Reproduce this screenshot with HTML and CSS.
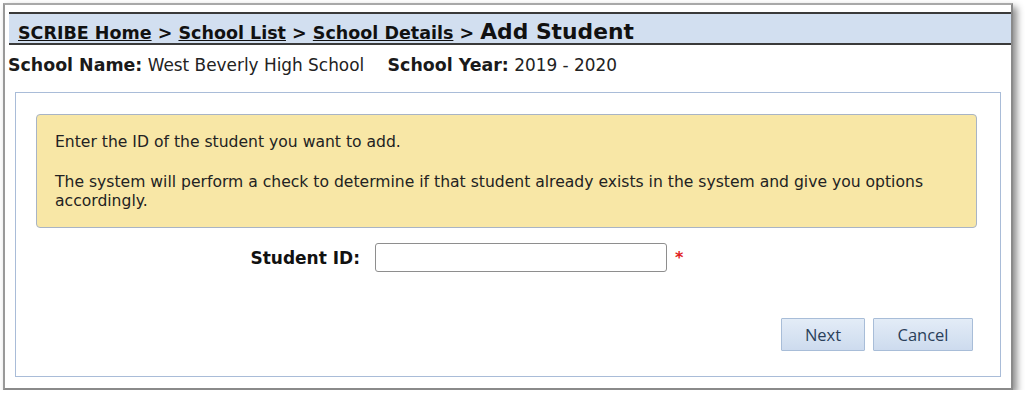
FILE: index.html
```html
<!DOCTYPE html>
<html>
<head>
<meta charset="utf-8">
<link rel="stylesheet" href="styles.css">
</head>
<body>
<div class="frame">
  <div class="crumbs"><a href="#">SCRIBE Home</a> &gt; <a href="#">School List</a> &gt; <a href="#">School Details</a> &gt; <span class="current">Add Student</span></div>
  <div class="school-info"><span class="lbl">School Name:</span> <span class="val">West Beverly High School</span> <span class="lbl year">School Year:</span> <span class="val">2019 - 2020</span></div>
  <div class="panel">
    <div class="notice">
      <p>Enter the ID of the student you want to add.</p>
      <p>The system will perform a check to determine if that student already exists in the system and give you options accordingly.</p>
    </div>
    <div class="field-row">
      <label class="field-label" for="sid">Student ID:</label>
      <input class="field-input" id="sid" type="text">
      <span class="required">*</span>
    </div>
    <div class="actions">
      <button class="btn btn-next">Next</button>
      <button class="btn btn-cancel">Cancel</button>
    </div>
  </div>
</div>
</body>
</html>
```
FILE: styles.css
```css
html, body {
  margin: 0;
  padding: 0;
  background: #ffffff;
}
body {
  font-family: "DejaVu Sans", Verdana, sans-serif;
  color: #1a1a1a;
}
.frame {
  margin: 3px 0 0 3px;
  width: 1006px;
  height: 383px;
  border: 2px solid #8a8a8a;
  border-top-color: #a8a8a8;
  border-left-color: #999999;
  background: #ffffff;
  box-shadow: 4px 4px 7px rgba(0, 0, 0, 0.45);
  overflow: hidden;
}
.crumbs {
  margin: 7px 0 0 4px;
  height: 33px;
  box-sizing: border-box;
  border-top: 2px solid #3a3a3a;
  border-bottom: 2px solid #3a3a3a;
  background: #d2dff0;
  padding: 5px 0 0 9px;
  overflow: hidden;
  white-space: nowrap;
  font-weight: bold;
  font-size: 17.5px;
  color: #111111;
}
.crumbs a {
  color: #111111;
  text-decoration: underline;
}
.crumbs .current {
  font-size: 21.8px;
}
.school-info {
  margin-top: 10px;
  padding-left: 3px;
  font-size: 16.9px;
  line-height: 20px;
  white-space: nowrap;
  color: #1a1a1a;
}
.school-info .lbl {
  font-weight: bold;
  font-size: 17.4px;
}
.school-info .year {
  margin-left: 18px;
}
.school-info .val {
  color: #222222;
}
.panel {
  margin: 17px 10px 0 10px;
  height: 285px;
  border: 1px solid #a9bcd8;
  box-sizing: border-box;
  padding: 21px 23px 0 20px;
}
.notice {
  background: #f8e7a6;
  border: 1px solid #a8b4c6;
  border-radius: 4px;
  padding: 18px 18px 16px;
  font-size: 15.6px;
  line-height: 19px;
  color: #222222;
}
.notice p {
  margin: 0;
}
.notice p + p {
  margin-top: 21px;
}
.field-row {
  margin-top: 15px;
  display: flex;
  align-items: center;
}
.field-label {
  width: 339px;
  text-align: right;
  font-weight: bold;
  font-size: 17px;
  padding-right: 15px;
  box-sizing: border-box;
  color: #111111;
}
.field-input {
  width: 292px;
  height: 29px;
  box-sizing: border-box;
  border: 1px solid #8e8e8e;
  border-radius: 3px;
  margin: 0;
  padding: 2px 4px;
}
.required {
  color: #e02020;
  font-weight: bold;
  font-size: 16px;
  margin-left: 8px;
}
.actions {
  margin-top: 46px;
  padding-right: 4px;
  display: flex;
  justify-content: flex-end;
  gap: 8px;
}
.btn {
  font-family: "Open Sans", "Noto Sans", sans-serif;
  font-size: 16.5px;
  color: #2a3f5a;
  height: 33px;
  border: 1px solid #a8bdd8;
  border-radius: 1px;
  background: linear-gradient(#e3ecf7, #cddbee);
  padding: 0;
  margin: 0;
}
.btn-next {
  width: 84px;
}
.btn-cancel {
  width: 100px;
}
```
